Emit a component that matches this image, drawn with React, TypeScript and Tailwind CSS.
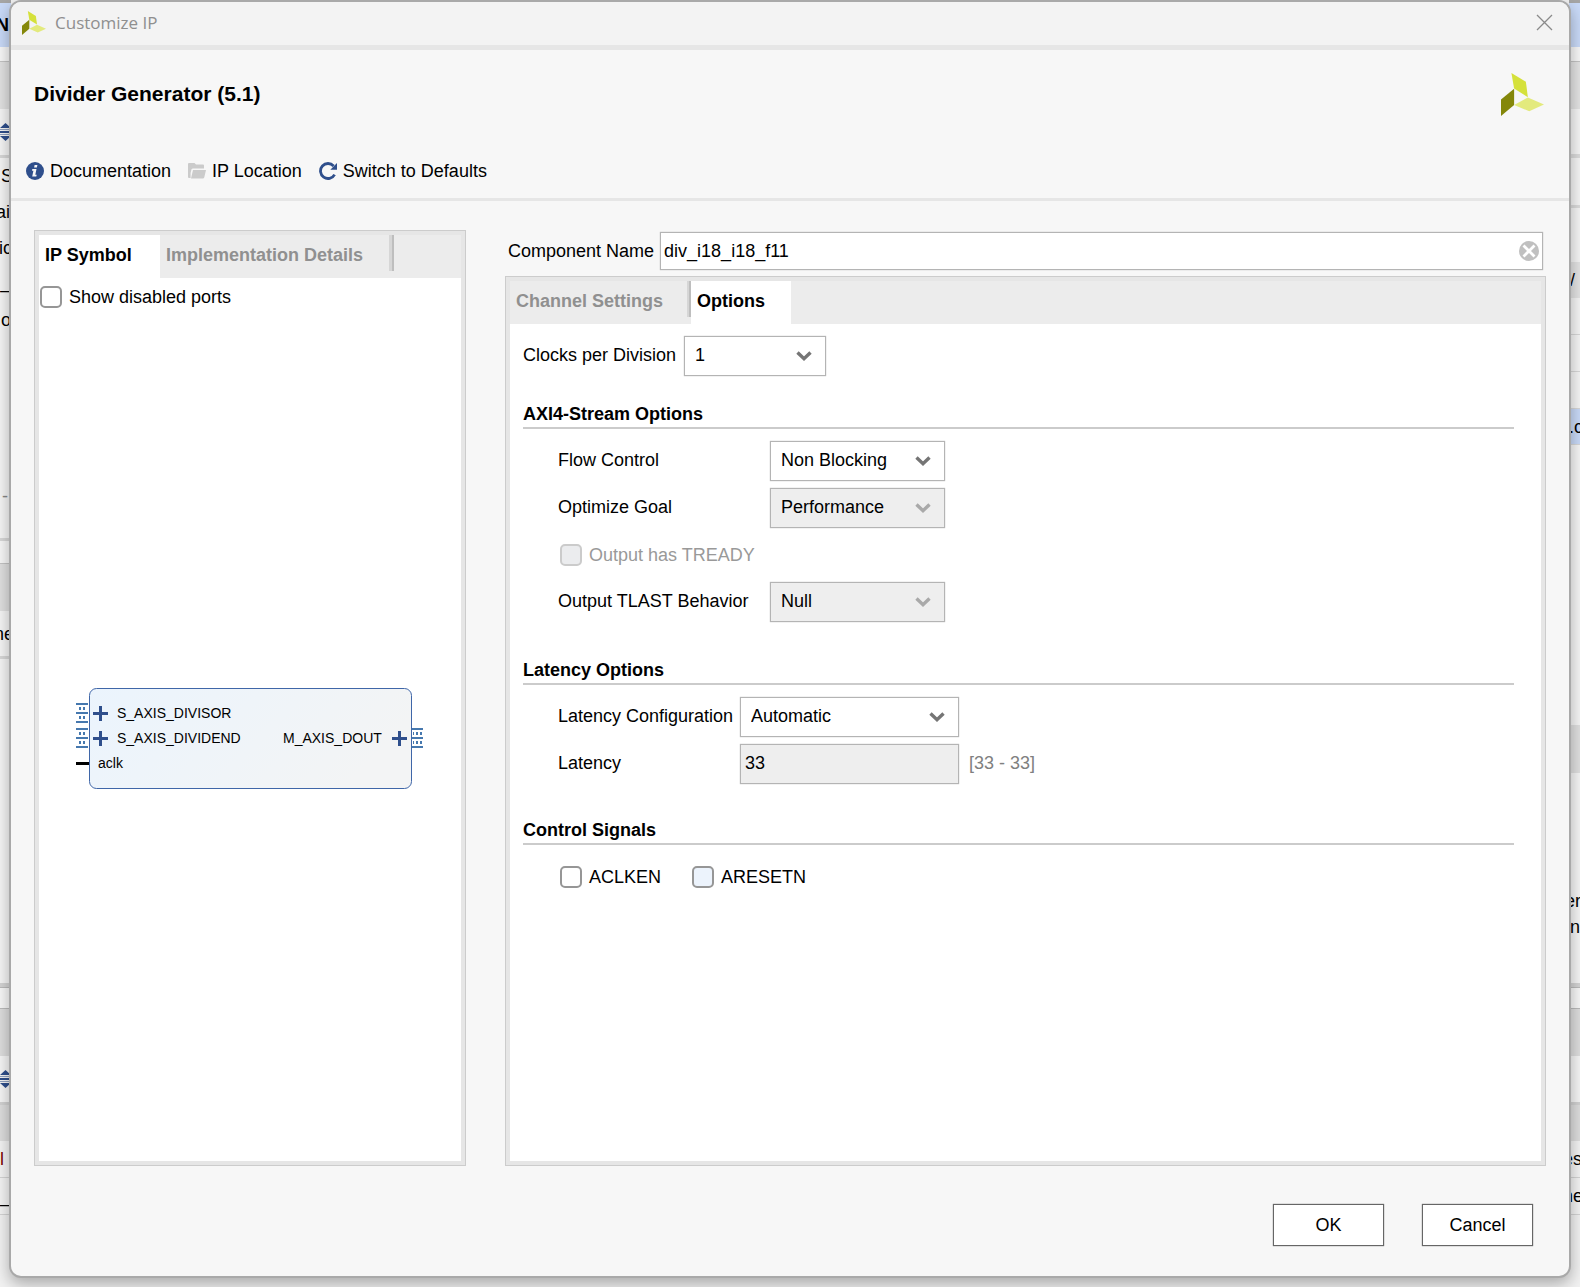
import { ReactNode, useState } from 'react';

function Logo({ className }: { className: string }) {
  return (
    <svg viewBox="363 219 128 128" className={className} aria-hidden="true">
      <path d="M394 219 437 245 443 291 402 265Z" fill="#d5e13b" />
      <path d="M402 266V314L363 347V298Z" fill="#84870a" />
      <path d="M402 314 443 292 491 313 447 333Z" fill="#e3ea7d" />
    </svg>
  );
}

function Chevron({ muted }: { muted?: boolean }) {
  return (
    <svg viewBox="0 0 16 12" className="absolute right-3.5 top-3.5 w-4 h-3 pointer-events-none" aria-hidden="true">
      <path d="M1.5 2.5 8 8.7 14.5 2.5" fill="none" stroke={muted ? '#a9a9a9' : '#757575'} strokeWidth="3.4" />
    </svg>
  );
}

type ComboProps = { id: string; options: string[]; width: string; disabled?: boolean };

function Combo({ id, options, width, disabled }: ComboProps) {
  return (
    <div className={`relative ${width}`}>
      <select
        id={id}
        disabled={disabled}
        className="block w-full h-10 appearance-none border border-[#b4b4b4] shadow-[0_0_1px_#b4b4b4] pl-2.5 pb-0.5 bg-white text-black disabled:bg-[#eeeeee] disabled:opacity-100 outline-none"
      >
        {options.map((o) => (
          <option key={o}>{o}</option>
        ))}
      </select>
      <Chevron muted={disabled} />
    </div>
  );
}

type CheckProps = { id: string; label: string; disabled?: boolean; hot?: boolean };

function Check({ id, label, disabled, hot }: CheckProps) {
  return (
    <div className="flex items-center gap-[7px]">
      <input
        type="checkbox"
        id={id}
        disabled={disabled}
        className={`appearance-none size-[22px] shrink-0 rounded-[5px] border-2 border-[#969696] checked:bg-[#2f4f8c] disabled:border-[#cbcbcb] disabled:bg-[#ebecee] ${hot ? 'bg-[#ecf3fc]' : 'bg-white'}`}
      />
      <label htmlFor={id} className={disabled ? 'text-[#999999]' : ''}>{label}</label>
    </div>
  );
}

function Field({ id, label, labelWidth, children }: { id: string; label: string; labelWidth: string; children: ReactNode }) {
  return (
    <div className="flex items-center h-10">
      <label htmlFor={id} className={`shrink-0 pb-0.5 ${labelWidth}`}>{label}</label>
      {children}
    </div>
  );
}

function Section({ title, className, children }: { title: string; className: string; children: ReactNode }) {
  return (
    <section className={className}>
      <h2 className="font-bold pb-px border-b-2 border-[#cbcbcb]">{title}</h2>
      <div className="flex flex-col gap-[7px] pt-3 pl-[35px]">{children}</div>
    </section>
  );
}

function Panel({ className, children }: { className: string; children: ReactNode }) {
  return (
    <div className={`flex flex-col border border-[#cccccc] ${className}`}>
      <div className="flex-1 flex flex-col border-4 border-[#e6e6e6] bg-white">{children}</div>
    </div>
  );
}

function Bus({ x, y }: { x: number; y: number }) {
  return (
    <g transform={`translate(${x} ${y})`} fill="#4678ae">
      <path d="M0 0H12V2H0ZM0 9H12V11H0ZM0 18H12V20H0Z" />
      <path d="M3 4H5V7H3ZM7 4H9V7H7ZM3 13H5V16H3ZM7 13H9V16H7Z" />
    </g>
  );
}

function Plus({ x, y }: { x: number; y: number }) {
  return <path transform={`translate(${x} ${y})`} d="M-7 0H8M.5-7.5V7.5" stroke="#2f4f8c" strokeWidth="3" />;
}

function IpSymbol() {
  return (
    <svg viewBox="0 0 351 103" className="w-[351px] h-[103px]" fontSize="14" role="img" aria-label="IP symbol">
      <defs>
        <linearGradient id="body" x1="0" y1="0" x2="1" y2="0.3">
          <stop offset="0" stopColor="#ebf4fd" />
          <stop offset="1" stopColor="#f3f4f5" />
        </linearGradient>
      </defs>
      <rect x="14.5" y="1.5" width="322" height="100" rx="7" fill="url(#body)" stroke="#3f66a8" />
      <Bus x={1} y={16} />
      <Bus x={1} y={41} />
      <path d="M337 41H348V43H337ZM337 50H348V52H337ZM337 59H348V61H337Z" fill="#4678ae" />
      <path d="M338 45H339V48H338ZM341 45H343V48H341ZM345 45H347V48H345ZM338 54H339V57H338ZM341 54H343V57H341ZM345 54H347V57H345Z" fill="#4678ae" />
      <Plus x={25} y={26.5} />
      <Plus x={25} y={51.5} />
      <Plus x={324} y={51.5} />
      <path d="M1 76.5H14" stroke="#000" strokeWidth="3" />
      <text x="42" y="31">S_AXIS_DIVISOR</text>
      <text x="42" y="56">S_AXIS_DIVIDEND</text>
      <text x="208" y="56">M_AXIS_DOUT</text>
      <text x="23" y="81">aclk</text>
    </svg>
  );
}

function SortIcon() {
  return (
    <svg viewBox="0 0 12 18" className="w-3 h-[18px] shrink-0" fill="#2f4f8c" aria-hidden="true">
      <path d="M5.5 0 11 5H0ZM5.5 18 0 13H11ZM0 8H12V10H0Z" />
      <path d="M0 6H12V7H0ZM0 11H12V12H0Z" opacity="0.5" />
    </svg>
  );
}

type Strip = { cls: string; content?: ReactNode };

// edges of the main window that stay visible around the dialog
const leftStrips: Strip[] = [
  { cls: 'h-[3px] bg-[#a6a6a6]' },
  { cls: 'h-11 bg-[#c9daf8] font-bold', content: <span className="-ml-1">NA</span> },
  { cls: 'h-[14px] bg-[#f8f8f8]' },
  { cls: 'h-12 bg-[#e2e2e2] border-t border-[#c4c4c4]' },
  { cls: 'h-[46px] bg-[#f6f6f6]', content: <SortIcon /> },
  { cls: 'h-[3px] bg-[#d8d8d8]' },
  { cls: 'h-9 bg-[#f6f6f6] pl-px', content: 'S' },
  { cls: 'h-9 bg-[#f6f6f6]', content: <span className="-ml-1">ain</span> },
  { cls: 'h-9 bg-[#f6f6f6]', content: <span className="-ml-px">ic</span> },
  { cls: 'h-9 bg-[#f6f6f6] pt-3', content: '—' },
  { cls: 'h-9 bg-[#f6f6f6] pl-px', content: 'o' },
  { cls: 'h-[140px] bg-[#f6f6f6]' },
  { cls: 'h-9 bg-[#f6f6f6] pl-0.5 text-[#888888]', content: '-' },
  { cls: 'h-6 bg-[#f6f6f6]' },
  { cls: 'h-[3px] bg-[#d8d8d8]' },
  { cls: 'h-[22px] bg-[#f8f8f8]' },
  { cls: 'h-12 bg-[#e0e0e0] border-t border-[#c4c4c4]' },
  { cls: 'h-[45px] bg-[#f6f6f6]', content: <span className="-ml-1.5">ne</span> },
  { cls: 'h-[3px] bg-[#d8d8d8]' },
  { cls: 'h-[324px] bg-[#f6f6f6]' },
  { cls: 'h-[5px] bg-[#d4d4d4] border-b border-[#bbbbbb]' },
  { cls: 'h-5 bg-[#f8f8f8]' },
  { cls: 'h-12 bg-[#dedede] border-t border-[#bbbbbb]' },
  { cls: 'h-[46px] bg-[#f6f6f6]', content: <SortIcon /> },
  { cls: 'h-[39px] bg-[#dedede] border-t-3 border-[#d2d2d2]' },
  { cls: 'h-[37px] bg-[#f4f4f4] border-b border-[#d4d4d4] text-[#7a0000]', content: 'l' },
  { cls: 'h-[37px] bg-[#f4f4f4] border-b border-[#d4d4d4]', content: '_' },
  { cls: 'flex-1 bg-[#f2f2f2]' },
];

const rightStrips: Strip[] = [
  { cls: 'h-[3px] bg-[#a6a6a6]' },
  { cls: 'h-11 bg-[#c9daf8]' },
  { cls: 'h-[14px] bg-[#f8f8f8]' },
  { cls: 'h-12 bg-[#e4e4e4] border-t border-[#c4c4c4]' },
  { cls: 'h-[45px] bg-[#f6f6f6]' },
  { cls: 'h-1 bg-[#dcdcdc]' },
  { cls: 'h-[50px] bg-[#f6f6f6] border-b-3 border-[#dcdcdc]' },
  { cls: 'h-[54px] bg-[#f6f6f6]' },
  { cls: 'h-9 bg-[#e4e4e4] pl-px', content: '/' },
  { cls: 'h-[37px] bg-[#f6f6f6] border-b border-[#d8d8d8]' },
  { cls: 'h-[37px] bg-[#f6f6f6] border-b border-[#d8d8d8]' },
  { cls: 'h-9 bg-[#f6f6f6]' },
  { cls: 'h-[37px] bg-[#c9daf8] border-y border-[#d8d8d8]', content: '.c' },
  { cls: 'h-[280px] bg-[#f6f6f6]' },
  { cls: 'h-12 bg-[#e0e0e0]' },
  { cls: 'h-[115px] bg-[#f6f6f6]' },
  { cls: 'h-[26px] bg-[#f6f6f6]', content: <span className="-ml-1">er</span> },
  { cls: 'h-[26px] bg-[#f6f6f6] pl-px', content: 'n' },
  { cls: 'h-[43px] bg-[#f6f6f6]' },
  { cls: 'h-[5px] bg-[#d4d4d4] border-b border-[#bbbbbb]' },
  { cls: 'h-5 bg-[#f8f8f8]' },
  { cls: 'h-12 bg-[#dedede] border-t border-[#bbbbbb]' },
  { cls: 'h-[46px] bg-[#f6f6f6]' },
  { cls: 'h-[39px] bg-[#dedede] border-t-3 border-[#d2d2d2]' },
  { cls: 'h-[37px] bg-[#f4f4f4] border-b border-[#d4d4d4]', content: <span className="-ml-1.5">es</span> },
  { cls: 'h-[37px] bg-[#f4f4f4] border-b border-[#d4d4d4]', content: <span className="-ml-1.5">ne</span> },
  { cls: 'flex-1 bg-[#f2f2f2]' },
];

function Edge({ strips }: { strips: Strip[] }) {
  return (
    <div className="w-[11px] shrink-0 flex flex-col">
      {strips.map((s, i) => (
        <div key={i} className={`flex items-center shrink-0 overflow-hidden ${s.cls}`}>{s.content}</div>
      ))}
    </div>
  );
}

export default function App() {
  const [name, setName] = useState('div_i18_i18_f11');

  return (
    <div className="grid min-h-screen text-lg leading-6 text-black font-['Liberation_Sans',Arial,sans-serif]">
      <div className="[grid-area:1/1] flex min-w-0 overflow-hidden" aria-hidden="true">
        <Edge strips={leftStrips} />
        <div className="flex-1 bg-[#f2f2f2]"></div>
        <Edge strips={rightStrips} />
      </div>

      <div
        role="dialog"
        aria-label="Customize IP"
        className="[grid-area:1/1] z-10 min-w-0 mx-[9px] mb-[9px] flex flex-col bg-[#f7f7f7] border-2 border-[#a9a9a9] rounded-xl overflow-hidden shadow-[0_6px_16px_rgba(0,0,0,0.3)]"
      >
        <div className="flex items-center h-12 pb-0.5 pl-[11px] pr-4 bg-[#f3f3f3] border-b-5 border-[#e6e6e6]">
          <Logo className="size-6" />
          <span className="flex-1 pl-[9px] text-[17px] text-[#8f8f8f] font-['Open_Sans','Noto_Sans',sans-serif]">Customize IP</span>
          <button type="button" aria-label="Close">
            <svg viewBox="0 0 17 17" className="size-[17px]" stroke="#8a8a8a" strokeWidth="1.3" aria-hidden="true">
              <path d="M1 1 16 16M16 1 1 16" />
            </svg>
          </button>
        </div>

        <header className="border-b-3 border-[#e6e6e6]">
          <div className="flex items-center justify-between h-[88px] pl-[23px] pr-[25px]">
            <h1 className="text-[21px] font-bold">Divider Generator (5.1)</h1>
            <Logo className="size-[43px]" />
          </div>
          <div className="flex items-center gap-[17px] h-[60px] pt-1.5 pl-[15px]">
            <button type="button" className="flex items-center gap-1.5">
              <svg viewBox="0 0 18 18" className="size-[18px]" aria-hidden="true">
                <circle cx="9" cy="9" r="9" fill="#2f4f8c" />
                <path d="M8.6 3H11.4L10.9 5.6H8.1ZM6.3 7H10.5L9.3 12.7H10.7L10.3 14.4H6.2L7.4 8.7H6Z" fill="#f7f7f7" />
              </svg>
              Documentation
            </button>
            <button type="button" className="flex items-center gap-1.5">
              <svg viewBox="0 0 18 18" className="size-[18px]" fill="#cbcbcb" aria-hidden="true">
                <path d="M0 2Q0 1 1 1H6.5L8 2.5H15Q16 2.5 16 3.5V6.5H5Q3.8 6.5 3.5 7.3L2.6 11V16H1Q0 16 0 15Z" />
                <path d="M5 8H18L16.3 15.2Q16 16.5 14.8 16.5H3Z" />
              </svg>
              IP Location
            </button>
            <button type="button" className="flex items-center gap-1.5">
              <svg viewBox="0 0 18 18" className="size-[18px]" aria-hidden="true">
                <path d="M15.6 12.6A7.5 7.5 0 1 1 14.6 4" fill="none" stroke="#2f4f8c" strokeWidth="2.8" />
                <path d="M18 1V7.7H11.3Z" fill="#2f4f8c" />
              </svg>
              Switch to Defaults
            </button>
          </div>
        </header>

        <main className="flex-1 flex gap-[39px] pt-[29px] px-[23px]">
          <Panel className="w-[432px] shrink-0">
            <div role="tablist" className="flex items-start h-[43px] bg-[#ececec] font-bold">
              <button type="button" role="tab" aria-selected="true" className="w-[121px] h-[43px] pl-1.5 pb-1 text-left bg-white">
                IP Symbol
              </button>
              <button type="button" role="tab" aria-selected="false" className="w-[234px] h-9 pl-1.5 pt-[3px] text-left text-[#909090] border-r-2 border-[#bebebe] shadow-[inset_-3px_0_#d6d6d6]">
                Implementation Details
              </button>
            </div>
            <div className="pt-[7px] pb-2 pl-px">
              <Check id="showDisabled" label="Show disabled ports" />
            </div>
            <div className="flex-1 flex items-center justify-center pb-0.5">
              <IpSymbol />
            </div>
          </Panel>

          <div className="flex-1 flex flex-col min-w-0">
            <div className="flex items-center gap-1.5 mt-0.5 mb-1.5 px-[3px]">
              <label htmlFor="componentName" className="shrink-0">Component Name</label>
              <div className="relative flex-1">
                <input
                  type="text"
                  id="componentName"
                  value={name}
                  onChange={(e) => setName(e.target.value)}
                  className="block w-full h-[38px] pl-[3px] pr-9 bg-white border border-[#b4b4b4] shadow-[0_0_1px_#b4b4b4] outline-none"
                />
                <button type="button" aria-label="Clear" onClick={() => setName('')} className="absolute right-1 top-[9px]">
                  <svg viewBox="0 0 20 20" className="size-5" aria-hidden="true">
                    <circle cx="10" cy="10" r="10" fill="#c0c0c0" />
                    <path d="M4.5 4.5 15.5 15.5M15.5 4.5 4.5 15.5" stroke="#fff" strokeWidth="2.8" />
                  </svg>
                </button>
              </div>
            </div>

            <Panel className="flex-1">
              <div role="tablist" className="flex items-start h-[43px] bg-[#ececec] font-bold">
                <button type="button" role="tab" aria-selected="false" className="w-[181px] h-9 pl-1.5 pt-[3px] text-left text-[#909090] border-r-2 border-[#bebebe] shadow-[inset_-2px_0_#d6d6d6]">
                  Channel Settings
                </button>
                <button type="button" role="tab" aria-selected="true" className="w-[100px] h-[43px] pl-1.5 pb-1 text-left bg-white">
                  Options
                </button>
              </div>

              <div className="pt-3 pl-[13px] pr-[27px]">
                <Field id="clocks" label="Clocks per Division" labelWidth="w-[161px]">
                  <Combo id="clocks" options={['1', '2', '4', '8']} width="w-[142px]" />
                </Field>

                <Section title="AXI4-Stream Options" className="mt-[26px]">
                  <Field id="flow" label="Flow Control" labelWidth="w-[212px]">
                    <Combo id="flow" options={['Non Blocking', 'Blocking']} width="w-[175px]" />
                  </Field>
                  <Field id="goal" label="Optimize Goal" labelWidth="w-[212px]">
                    <Combo id="goal" options={['Performance', 'Resources']} width="w-[175px]" disabled />
                  </Field>
                  <div className="flex items-center h-10 pl-0.5">
                    <Check id="tready" label="Output has TREADY" disabled />
                  </div>
                  <Field id="tlast" label="Output TLAST Behavior" labelWidth="w-[212px]">
                    <Combo id="tlast" options={['Null']} width="w-[175px]" disabled />
                  </Field>
                </Section>

                <Section title="Latency Options" className="mt-9">
                  <Field id="latencyConfig" label="Latency Configuration" labelWidth="w-[182px]">
                    <Combo id="latencyConfig" options={['Automatic', 'Manual']} width="w-[219px]" />
                  </Field>
                  <Field id="latency" label="Latency" labelWidth="w-[182px]">
                    <input
                      type="text"
                      id="latency"
                      defaultValue="33"
                      disabled
                      className="w-[219px] h-10 pl-1 pb-0.5 bg-[#eeeeee] border border-[#b4b4b4] shadow-[0_0_1px_#b4b4b4]"
                    />
                    <span className="pl-2.5 pb-0.5 text-[#808080]">[33 - 33]</span>
                  </Field>
                </Section>

                <Section title="Control Signals" className="mt-[34px]">
                  <div className="flex items-center gap-[31px] h-10 pl-0.5">
                    <Check id="aclken" label="ACLKEN" />
                    <Check id="aresetn" label="ARESETN" hot />
                  </div>
                </Section>
              </div>
            </Panel>
          </div>
        </main>

        <footer className="flex justify-end gap-[38px] pt-[38px] pb-[30px] pr-9">
          <button type="button" className="w-[111px] h-[42px] bg-white border border-[#666666] shadow-[0_0_1px_#666666]">OK</button>
          <button type="button" className="w-[111px] h-[42px] bg-white border border-[#666666] shadow-[0_0_1px_#666666]">Cancel</button>
        </footer>
      </div>
    </div>
  );
}
